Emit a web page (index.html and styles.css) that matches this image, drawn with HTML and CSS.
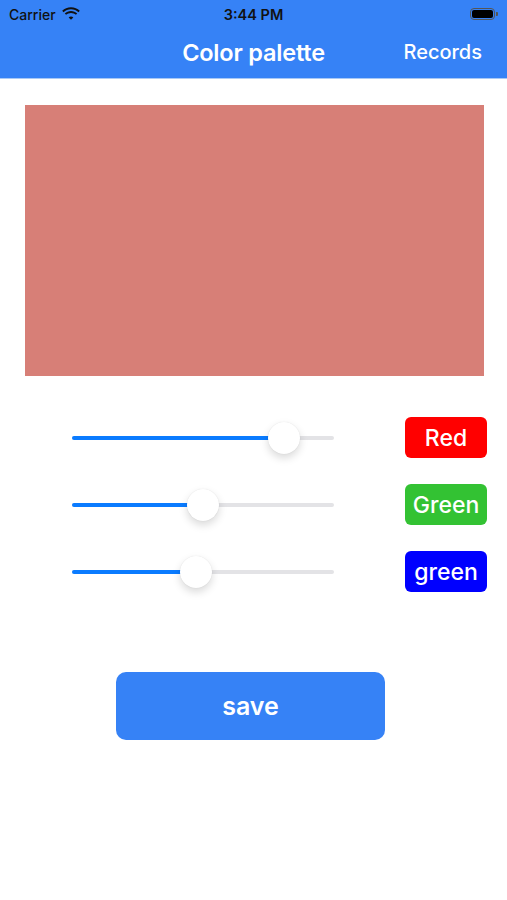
FILE: index.html
```html
<!DOCTYPE html>
<html>
<head>
<meta charset="utf-8">
<link rel="stylesheet" href="styles.css">
</head>
<body>
<div class="app">
  <header class="header">
    <div class="status">
      <div class="status-left">
        <span class="carrier">Carrier</span>
        <svg class="wifi" width="18" height="13" viewBox="0 0 18 13">
          <path d="M9 2.2c2.9 0 5.5 1.1 7.5 3l1.3-1.4C15.5 1.6 12.4.3 9 .3S2.5 1.6.2 3.8l1.3 1.4c2-1.9 4.6-3 7.5-3z" fill="#111"/>
          <path d="M9 5.9c1.9 0 3.6.7 4.9 1.9l1.3-1.4C13.6 4.9 11.4 4 9 4s-4.6.9-6.2 2.4l1.3 1.4C5.4 6.6 7.1 5.9 9 5.9z" fill="#111"/>
          <path d="M9 9.5c.9 0 1.7.3 2.3.9L9 12.8l-2.3-2.4c.6-.6 1.4-.9 2.3-.9z" fill="#111"/>
        </svg>
      </div>
      <span class="time">3:44 PM</span>
      <div class="status-right">
        <div class="battery"><div class="battery-fill"></div></div>
        <div class="battery-cap"></div>
      </div>
    </div>
    <div class="nav">
      <span class="title">Color palette</span>
      <span class="records">Records</span>
    </div>
  </header>

  <main class="content">
    <div class="swatch"></div>

    <div class="controls">
      <div class="row">
        <div class="slider">
          <div class="track"><div class="fill" style="width:81%"></div></div>
          <div class="thumb" style="left:81%"></div>
        </div>
        <div class="tag tag-red">Red</div>
      </div>
      <div class="row">
        <div class="slider">
          <div class="track"><div class="fill" style="width:50%"></div></div>
          <div class="thumb" style="left:50%"></div>
        </div>
        <div class="tag tag-green">Green</div>
      </div>
      <div class="row">
        <div class="slider">
          <div class="track"><div class="fill" style="width:47.5%"></div></div>
          <div class="thumb" style="left:47.5%"></div>
        </div>
        <div class="tag tag-blue">green</div>
      </div>
    </div>

    <div class="actions">
      <button class="save">save</button>
    </div>
  </main>
</div>
</body>
</html>
```

FILE: styles.css
```css
* { box-sizing: border-box; }
html, body {
  margin: 0;
  padding: 0;
  background: #ffffff;
  font-family: Inter, "Liberation Sans", sans-serif;
}
.app {
  width: 507px;
  min-height: 900px;
  background: #fff;
}
.header {
  background: #3682f6;
  height: 79px;
  border-bottom: 1px solid #a9c9f6;
  display: flex;
  flex-direction: column;
}
.status {
  height: 28px;
  display: flex;
  align-items: center;
  justify-content: space-between;
  padding: 0 9px 0 9px;
  position: relative;
}
.status-left {
  display: flex;
  align-items: center;
  gap: 6px;
  width: 100px;
}
.carrier {
  font-size: 14px;
  font-weight: 500;
  color: #111;
}
.wifi { margin-top: -2px; }
.time {
  font-size: 14.5px;
  font-weight: 600;
  color: #111;
}
.status-right {
  width: 100px;
  display: flex;
  justify-content: flex-end;
  align-items: center;
  gap: 1px;
}
.battery {
  width: 25px;
  height: 12px;
  border: 1px solid #555;
  border-radius: 4px;
  padding: 1px;
}
.battery-fill {
  width: 100%;
  height: 100%;
  background: #000;
  border-radius: 2px;
}
.battery-cap {
  width: 2px;
  height: 4px;
  background: #555;
  border-radius: 0 1px 1px 0;
}
.nav {
  flex: 1;
  position: relative;
  display: flex;
  align-items: center;
  justify-content: center;
  padding-bottom: 2px;
}
.title {
  color: #fff;
  font-size: 23.5px;
  font-weight: 600;
  letter-spacing: -0.2px;
}
.records {
  position: absolute;
  right: 25px;
  color: #fff;
  font-size: 20px;
  font-weight: 500;
}
.content {
  display: flex;
  flex-direction: column;
}
.swatch {
  margin: 26px 23px 0 25px;
  height: 271px;
  background: #d77f77;
}
.controls {
  margin-top: 41px;
  display: flex;
  flex-direction: column;
  gap: 26px;
}
.row {
  display: flex;
  align-items: center;
  height: 41px;
  padding-left: 72px;
}
.slider {
  position: relative;
  width: 262px;
  height: 41px;
  display: flex;
  align-items: center;
}
.track {
  width: 100%;
  height: 4px;
  background: #e3e3e6;
  border-radius: 2px;
  overflow: hidden;
}
.fill {
  height: 100%;
  background: #0a7bff;
}
.thumb {
  position: absolute;
  top: 50%;
  width: 32px;
  height: 32px;
  margin-left: -16px;
  margin-top: -16px;
  border-radius: 50%;
  background: #fff;
  box-shadow: 0 4px 9px rgba(0,0,0,0.15), 0 0 1px rgba(0,0,0,0.12);
}
.tag {
  margin-left: 71px;
  width: 82px;
  height: 41px;
  border-radius: 6px;
  color: #fff;
  font-size: 23px;
  font-weight: 500;
  display: flex;
  align-items: center;
  justify-content: center;
}
.tag-red { background: #ff0000; }
.tag-green { background: #33c233; }
.tag-blue { background: #0000ff; }
.actions {
  margin-top: 80px;
  padding-left: 116px;
}
.save {
  width: 269px;
  height: 68px;
  border: none;
  border-radius: 10px;
  background: #3682f6;
  color: #fff;
  font-family: Inter, "Liberation Sans", sans-serif;
  font-size: 25px;
  font-weight: 600;
  padding: 0;
}
```
